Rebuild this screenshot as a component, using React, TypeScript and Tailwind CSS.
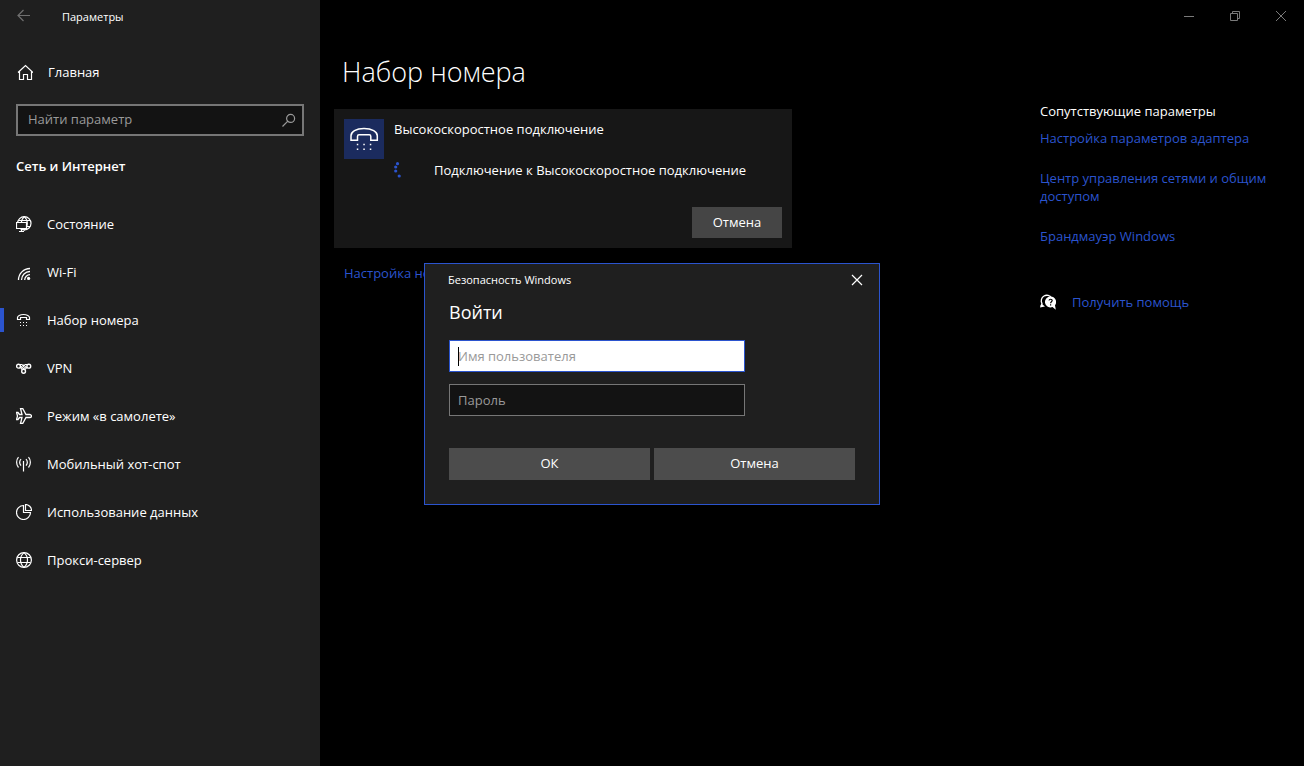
import type { ReactNode } from "react";

function Icon({ children, className = "" }: { children: ReactNode; className?: string }) {
  return (
    <svg
      className={`size-4 shrink-0 ${className}`}
      viewBox="0 0 16 16"
      fill="none"
      stroke="currentColor"
      strokeWidth="1.2"
      aria-hidden="true"
    >
      {children}
    </svg>
  );
}

const navItems: { label: string; active?: boolean; icon: ReactNode }[] = [
  {
    label: "Состояние",
    icon: (
      <>
        <circle cx="8.3" cy="7.3" r="6.7" />
        <path d="M8.3.6c-2 1.8-3 4-3 6.7s1 5 3 6.700c2-1.800 3-4 3-6.700s-1-5-3-6.700zM2.500 4.500h11.700M2 10.500h12.300" />
        <path d="M.500 6.500h10v6H.500z" fill="#1f1f1f" />
        <path d="M5.500 12.500v3M3 15.500h5" />
      </>
    ),
  },
  {
    label: "Wi-Fi",
    icon: (
      <>
        <path d="M2.500 16A11.500 11.500 0 0 1 14 4.500M5.500 16A8.500 8.500 0 0 1 14 7.500M8.700 16A5.300 5.300 0 0 1 14 10.700" strokeWidth="1.300" />
        <circle cx="12.600" cy="14.400" r="1.600" fill="currentColor" stroke="none" />
      </>
    ),
  },
  {
    label: "Набор номера",
    active: true,
    icon: (
      <>
        <path d="M1.500 7.500V5.500C1.500 4 4 2.500 7.500 2.500s6 1.500 6 3v2h-3v-2h-6v2z" />
        <path d="M4 10.500h1M7 10.500h1M10 10.500h1M4 13.500h1M7 13.500h1M10 13.500h1" />
      </>
    ),
  },
  {
    label: "VPN",
    icon: (
      <>
        <circle cx="2.500" cy="6.200" r="1.900" strokeWidth="1.400" />
        <circle cx="12.800" cy="6.200" r="1.900" strokeWidth="1.400" />
        <circle cx="7.600" cy="11.300" r="1.900" strokeWidth="1.400" />
        <path d="M3.500 4.500h2.500l1.600 2 1.600-2h2.500M4.300 7.200l1.800 2.500M11 7.200L9.100 9.700M5 6.200l2.600 2.700L10.200 6.200M7.600 4.500v1" />
      </>
    ),
  },
  {
    label: "Режим «в самолете»",
    icon: (
      <path
        d="M15.500 8c0-.8-.8-1.500-2-1.500H10L6.700.500H4.500L6 6.500H3.500L2 4.500H.500L1.500 8 .500 11.500H2l1.500-2H6l-1.500 6h2.200L10 9.500h3.500c1.200 0 2-.7 2-1.500z"
        strokeWidth="1.300"
      />
    ),
  },
  {
    label: "Мобильный хот-спот",
    icon: (
      <path d="M7.500 5v10.500M2.500 1.200C0 4 0 8.700 2.500 11.500M12.500 1.200c2.500 2.800 2.500 7.500 0 10.300M5 3c-1.600 2-1.600 4.700 0 6.700M10 3c1.600 2 1.600 4.700 0 6.700" />
    ),
  },
  {
    label: "Использование данных",
    icon: (
      <>
        <path d="M7.500 1.500A7 7 0 1 0 14.500 8.500H7.500V1.500z" />
        <path d="M9.500.500v6h6a6 6 0 0 0-6-6z" />
      </>
    ),
  },
  {
    label: "Прокси-сервер",
    icon: (
      <>
        <circle cx="8" cy="8" r="7.400" />
        <path d="M8 .600c-2.400 2-3.500 4.400-3.500 7.400s1.100 5.400 3.500 7.400c2.400-2 3.500-4.400 3.500-7.400S10.400 2.600 8 .600zM1.500 5.500h13M1.500 10.500h13" />
      </>
    ),
  },
];

function Sidebar() {
  return (
    <aside className="w-80 shrink-0 bg-[#1f1f1f]">
      <div className="flex h-8 items-center">
        <button aria-label="Назад" className="flex h-8 w-12 items-center justify-center text-[#6f6f6f]">
          <Icon>
            <path d="M14 7.500H2.500M7.500 2L2 7.500 7.500 13" />
          </Icon>
        </button>
        <span className="ml-3.5 pt-0.5 text-[11px]">Параметры</span>
      </div>
      <a href="#home" className="mt-4 flex h-12 items-center gap-[15px] pl-[17px]">
        <Icon>
          <path d="M1 8.500L8.500 1.500 16 8.500M2.500 7.500v8h4v-5h4v5h4v-8" />
        </Icon>
        <span className="pt-0.5">Главная</span>
      </a>
      <form role="search" className="mx-4 mt-2 flex h-8 items-center border-2 border-[#767676] bg-[#131313]">
        <input
          type="search"
          aria-label="Найти параметр"
          placeholder="Найти параметр"
          className="h-full min-w-0 flex-1 bg-transparent pb-0.5 pl-2.5 outline-none placeholder:text-[#9a9a9a]"
        />
        <button type="button" aria-label="Поиск" className="flex h-full w-7 items-center justify-center text-[#9a9a9a]">
          <Icon>
            <circle cx="10.600" cy="6.400" r="4" />
            <path d="M7.800 9.200L2.500 14.500" />
          </Icon>
        </button>
      </form>
      <h2 className="mx-4 mt-4 flex h-7 items-center pt-0.5 font-semibold">Сеть и Интернет</h2>
      <nav className="mt-5">
        {navItems.map((item) => (
          <a
            key={item.label}
            href="#section"
            aria-current={item.active ? "page" : undefined}
            className="flex h-12 items-center"
          >
            <span className={item.active ? "h-6 w-1 bg-[#2b54ce]" : "h-6 w-1"} />
            <span className="flex items-center gap-[15px] pl-3">
              <Icon>{item.icon}</Icon>
              <span className="pt-0.5">{item.label}</span>
            </span>
          </a>
        ))}
      </nav>
    </aside>
  );
}

function WindowControls() {
  return (
    <div className="flex h-8 justify-end text-[#7a7a7a]">
      <button aria-label="Свернуть" className="flex w-[46px] items-center justify-center">
        <Icon>
          <path d="M3 8.500h10" strokeWidth="1" />
        </Icon>
      </button>
      <button aria-label="Развернуть" className="flex w-[46px] items-center justify-center">
        <Icon>
          <path d="M3.500 5.500h7v7h-7zM5.500 5.500v-2h7v7h-2" strokeWidth="1" />
        </Icon>
      </button>
      <button aria-label="Закрыть" className="flex w-[46px] items-center justify-center">
        <Icon>
          <path d="M3 3l10 10M13 3L3 13" strokeWidth="1" />
        </Icon>
      </button>
    </div>
  );
}

function ConnectionCard() {
  return (
    <section className="flex w-[458px] gap-2.5 bg-[#171717] p-2.5">
      <div className="size-10 shrink-0 bg-[#1b2b5e]">
        <svg viewBox="0 0 40 40" fill="none" stroke="#fff" strokeWidth="1.500" aria-hidden="true">
          <path d="M7 21.300v-4.500C7 13 12 9.500 20 9.500s13.300 3.500 13.300 7.300v4.500h-6.500V17.500c0-1-.5-1.700-1.500-1.700H15c-1 0-1.500.7-1.500 1.700v3.800z" />
          <path d="M12.800 25.500h1.500M19.300 25.500h1.500M25.800 25.500h1.500M12.800 30.300h1.500M19.300 30.300h1.500M25.800 30.300h1.500" />
        </svg>
      </div>
      <div className="flex flex-1 flex-col">
        <h2 className="leading-5">Высокоскоростное подключение</h2>
        <p className="mt-[21px] flex items-center gap-6 leading-5" role="status">
          <svg className="size-4" viewBox="0 0 16 16" fill="#2b54ce" aria-hidden="true">
            <circle cx="3.500" cy="1.700" r="1.600" />
            <circle cx="1.700" cy="5" r="1.600" />
            <circle cx="1.700" cy="9" r="1.600" />
            <circle cx="5.200" cy="14" r="1.600" />
          </svg>
          Подключение к Высокоскоростное подключение
        </p>
        <button className="mt-[27px] h-[31px] w-[90px] self-end bg-[#454545]">Отмена</button>
      </div>
    </section>
  );
}

function RelatedSettings() {
  return (
    <aside className="mt-[70px] mr-6 w-60 shrink-0 leading-[18px] text-[#2b54ce]">
      <h2 className="text-white">Сопутствующие параметры</h2>
      <ul className="mt-[9px] flex flex-col gap-[22px]">
        <li>
          <a href="#adapter">Настройка параметров адаптера</a>
        </li>
        <li>
          <a href="#sharing">Центр управления сетями и общим доступом</a>
        </li>
        <li>
          <a href="#firewall">Брандмауэр Windows</a>
        </li>
      </ul>
      <a href="#help" className="mt-12 flex items-center gap-4">
        <svg className="size-4 shrink-0" viewBox="0 0 16 16" aria-hidden="true">
          <path
            d="M1 12.500l1-3A5.300 5.300 0 1 1 11.500 4"
            fill="none"
            stroke="#fff"
            strokeWidth="1.300"
          />
          <path d="M0 13.500l1.300-4 3.700 3z" fill="#fff" />
          <path d="M10.500 2.500a5.500 5.500 0 1 0 2 10.600l3.300 2.700-.8-4.500a5.500 5.500 0 0 0-4.500-8.800z" fill="#fff" />
          <path d="M9 6.500c.2-1.700 3.200-1.700 3.200 0 0 1.200-1.600 1.200-1.600 2.700M10.600 10.300v1.200" fill="none" stroke="#000" strokeWidth="1.200" />
        </svg>
        Получить помощь
      </a>
    </aside>
  );
}

function SignInDialog() {
  return (
    <div className="fixed inset-0 flex items-center justify-center pt-0.5">
      <div
        role="dialog"
        aria-labelledby="dialog-title"
        className="w-[456px] border border-[#2b54ce] bg-[#1f1f1f] pb-6"
      >
        <div className="flex h-8 items-center justify-between pl-[23px]">
          <span className="text-[11px]">Безопасность Windows</span>
          <button aria-label="Закрыть" className="flex h-8 w-11 items-center justify-center">
            <Icon>
              <path d="M3 3l10 10M13 3L3 13" />
            </Icon>
          </button>
        </div>
        <form className="px-6">
          <h2 id="dialog-title" className="text-lg leading-8">
            Войти
          </h2>
          <div className="relative mt-3 w-[296px]">
            <input
              aria-label="Имя пользователя"
              placeholder="Имя пользователя"
              className="peer block h-8 w-full border border-[#2b54ce] bg-white px-2 text-black outline-none placeholder:text-[#999999]"
            />
            <span className="absolute top-[7px] left-[9px] h-[19px] w-px bg-black peer-focus:hidden" />
          </div>
          <input
            type="password"
            aria-label="Пароль"
            placeholder="Пароль"
            className="mt-3 block h-8 w-[296px] border border-[#767676] bg-[#131313] px-2 outline-none placeholder:text-[#9a9a9a]"
          />
          <div className="mt-8 grid grid-cols-2 gap-1">
            <button type="button" className="h-8 bg-[#4c4c4c]">
              ОК
            </button>
            <button type="button" className="h-8 bg-[#4c4c4c]">
              Отмена
            </button>
          </div>
        </form>
      </div>
    </div>
  );
}

export default function App() {
  return (
    <div className="flex min-h-screen bg-black font-['Open_Sans','Noto_Sans',sans-serif] text-[13px] text-white">
      <Sidebar />
      <div className="flex min-w-0 flex-1 flex-col">
        <WindowControls />
        <div className="flex justify-between">
          <main className="pl-3.5">
            <h1 className="mt-5 pl-2 text-[27px] leading-10 font-light">Набор номера</h1>
            <div className="mt-[17px]">
              <ConnectionCard />
            </div>
            <a href="#new" className="mt-4 ml-2.5 inline-block leading-[18px] text-[#2b54ce]">
              Настройка нового подключения
            </a>
          </main>
          <RelatedSettings />
        </div>
      </div>
      <SignInDialog />
    </div>
  );
}
